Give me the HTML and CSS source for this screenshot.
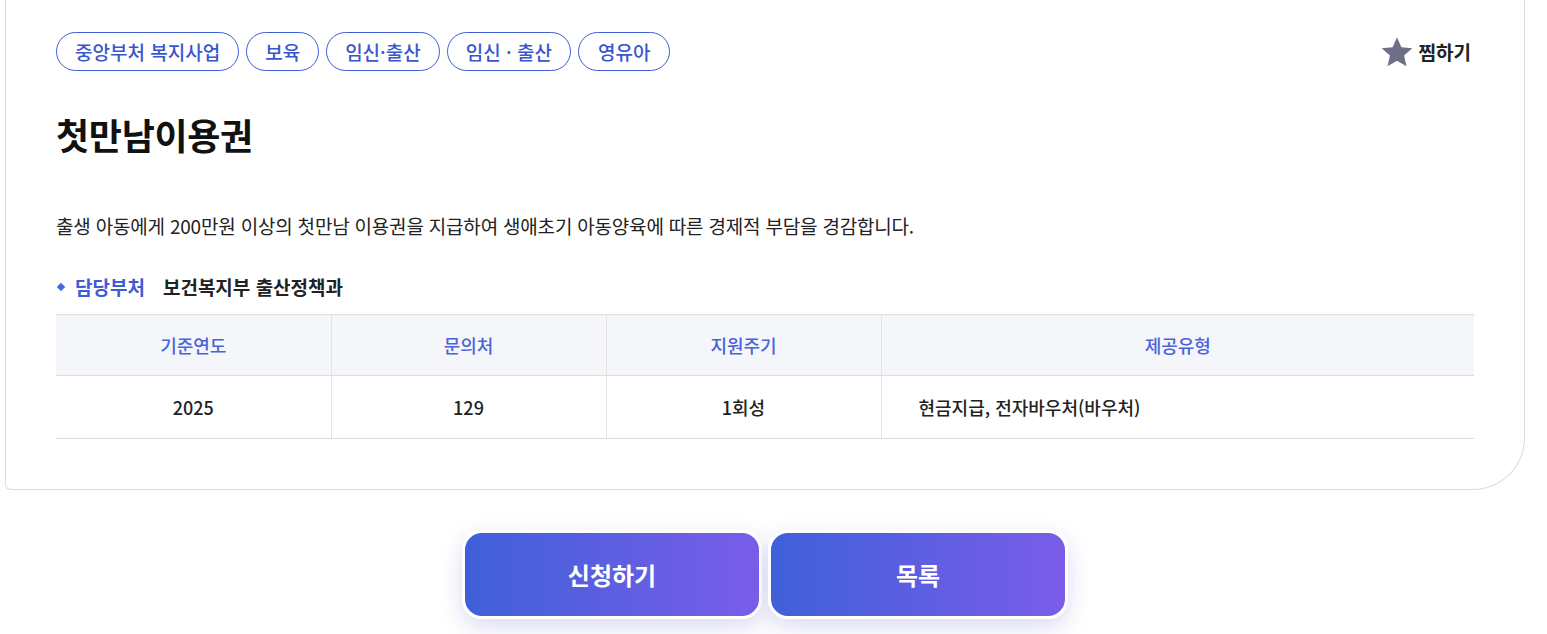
FILE: index.html
```html
<!DOCTYPE html>
<html lang="ko">
<head>
<meta charset="utf-8">
<title>첫만남이용권</title>
<link rel="stylesheet" href="styles.css">
</head>
<body>
<div class="page">
  <section class="card">
    <div class="top-row">
      <ul class="tags">
        <li class="tag">중앙부처 복지사업</li>
        <li class="tag">보육</li>
        <li class="tag">임신·출산</li>
        <li class="tag">임신 · 출산</li>
        <li class="tag">영유아</li>
      </ul>
      <button class="fav" type="button">
        <svg class="star" viewBox="0 0 24 24" width="34" height="34" aria-hidden="true"><path d="M12 1.6l3.1 7.1 7.7.7-5.8 5.1 1.7 7.6L12 18.1l-6.7 4 1.7-7.6-5.8-5.1 7.7-.7z" fill="#6c6f86"/></svg>
        <span>찜하기</span>
      </button>
    </div>
    <h1 class="title">첫만남이용권</h1>
    <p class="desc">출생 아동에게 200만원 이상의 첫만남 이용권을 지급하여 생애초기 아동양육에 따른 경제적 부담을 경감합니다.</p>
    <div class="dept">
      <span class="dept-label">담당부처</span>
      <span class="dept-value">보건복지부 출산정책과</span>
    </div>
    <table class="info">
      <thead>
        <tr><th class="c1">기준연도</th><th class="c2">문의처</th><th class="c3">지원주기</th><th class="c4">제공유형</th></tr>
      </thead>
      <tbody>
        <tr><td>2025</td><td>129</td><td>1회성</td><td class="left">현금지급, 전자바우처(바우처)</td></tr>
      </tbody>
    </table>
  </section>
  <div class="actions">
    <button class="btn" type="button">신청하기</button>
    <button class="btn" type="button">목록</button>
  </div>
</div>
</body>
</html>
```

FILE: styles.css
```css
* { box-sizing: border-box; }
html, body { margin: 0; padding: 0; background: #fff; }
body {
  font-family: "Noto Sans CJK KR", "Noto Sans", sans-serif;
  color: #222;
}
.page {
  width: 1520px;
  margin-left: 5px;
  padding-bottom: 40px;
}
.card {
  border: 1px solid #dcdcdc;
  border-top: 0;
  border-radius: 0 0 52px 6px;
  padding: 32px 50px 50px 50px;
  background: #fff;
}
.top-row {
  display: flex;
  justify-content: space-between;
  align-items: center;
}
.tags {
  display: flex;
  gap: 7px;
  list-style: none;
  margin: 0;
  padding: 0;
}
.tag {
  height: 39px;
  display: flex;
  align-items: center;
  padding: 0 18px;
  border: 1px solid #3d5fd6;
  border-radius: 20px;
  color: #3a56cf;
  font-size: 19px;
  font-weight: 500;
}
.tag:last-child { padding: 0 19px; }
.fav {
  display: flex;
  align-items: center;
  gap: 5px;
  background: none;
  border: 0;
  padding: 0;
  margin-right: 3px;
  font-family: inherit;
  font-size: 19px;
  font-weight: 700;
  color: #222;
}
.star { display: block; }
.title {
  margin: 39px 0 0 0;
  font-size: 36px;
  line-height: 48px;
  font-weight: 700;
  color: #111;
  letter-spacing: -0.3px;
}
.desc {
  margin: 54px 0 0 0;
  font-size: 19px;
  line-height: 28px;
  color: #222;
  letter-spacing: -0.2px;
}
.dept {
  margin-top: 33px;
  display: flex;
  align-items: center;
  font-size: 19px;
  line-height: 28px;
  font-weight: 700;
}
.dept-label {
  color: #3f5bd6;
  position: relative;
  padding-left: 19px;
  margin-right: 18px;
}
.dept-label::before {
  content: "";
  position: absolute;
  left: 2px;
  top: 50%;
  width: 6px;
  height: 6px;
  margin-top: -3px;
  background: #4a68e0;
  transform: rotate(45deg);
}
.dept-value { color: #222; }
.info {
  margin-top: 13px;
  width: 100%;
  border-collapse: collapse;
  table-layout: fixed;
  font-size: 18px;
}
.info th, .info td {
  border-top: 1px solid #dddddd;
  border-bottom: 1px solid #dddddd;
  border-left: 1px solid #e3e3e3;
  text-align: center;
}
.info th:first-child, .info td:first-child { border-left: 0; }
.info th {
  height: 61px;
  background: #f5f6fa;
  color: #4a63d9;
  font-weight: 500;
}
.info td {
  height: 63px;
  color: #222;
  font-weight: 500;
}
.info td.left { text-align: left; padding-left: 37px; }
.c1, .c2, .c3 { width: 275px; }
.actions {
  display: flex;
  justify-content: center;
  gap: 6px;
  margin-top: 40px;
}
.btn {
  width: 300px;
  height: 89px;
  border: 3px solid #fff;
  border-radius: 20px;
  background: linear-gradient(90deg, #3f60d8 0%, #7a5de9 100%);
  color: #fff;
  font-family: inherit;
  font-size: 24px;
  font-weight: 700;
  box-shadow: 0 8px 22px rgba(90, 90, 200, 0.22);
}
```
